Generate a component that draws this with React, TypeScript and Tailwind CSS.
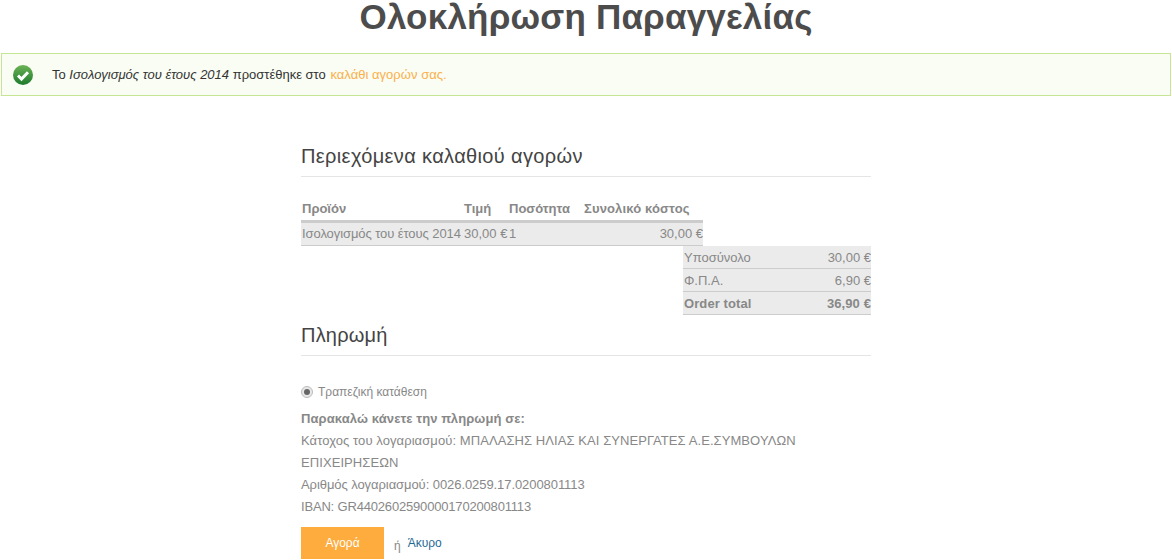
import React from 'react';

const totals = [
  { label: 'Υποσύνολο', value: '30,00 €' },
  { label: 'Φ.Π.Α.', value: '6,90 €' },
  { label: 'Order total', value: '36,90 €', bold: true },
];

const CheckIcon = () => (
  <svg width="22" height="22" viewBox="0 0 22 22">
    <defs>
      <linearGradient id="ok" x1="0" y1="0" x2="0" y2="1">
        <stop offset="0" stopColor="#6cb356" />
        <stop offset="1" stopColor="#1d7a2c" />
      </linearGradient>
    </defs>
    <circle cx="11" cy="11" r="10" fill="url(#ok)" />
    <path d="M6 11.5l3.5 3.5L16 8.2" fill="none" stroke="#fff" strokeWidth="3" />
  </svg>
);

const App: React.FC = () => {
  return (
    <div className="h-[560px] overflow-hidden bg-white font-['Liberation_Sans',Arial,sans-serif] text-[13px] text-[#888]">
      <h1 className="h-[53px] text-center text-[35px] font-bold leading-[33px] tracking-[0.2px] text-[#4c4c4c]">
        Ολοκλήρωση Παραγγελίας
      </h1>

      {/* Success message */}
      <div className="mx-px flex h-[43px] items-center border border-[#c6e695] bg-[#f9fdf3] pl-[10px] text-[#333]">
        <CheckIcon />
        <p className="ml-[18px]">
          Το <em>Ισολογισμός του έτους 2014</em> προστέθηκε στο{' '}
          <a className="ml-px tracking-[0.03px] text-[#fbaf4b]">καλάθι αγορών σας</a>
          <span className="text-[#fbaf4b]">.</span>
        </p>
      </div>

      <div className="ml-[301px] w-[570px]">
        <h2 className="mt-[46px] h-[35px] border-b border-[#e5e5e5] text-[20px] leading-[28px] tracking-[0.36px] text-[#444]">
          Περιεχόμενα καλαθιού αγορών
        </h2>

        <table className="mt-[21px] w-[402px] border-collapse">
          <thead>
            <tr className="h-[23px] border-b-[3px] border-[#ccc] text-left">
              <th className="w-[163px] pl-px font-bold">Προϊόν</th>
              <th className="w-[45px] font-bold">Τιμή</th>
              <th className="w-[75px] font-bold">Ποσότητα</th>
              <th className="font-bold tracking-[0.14px]">Συνολικό κόστος</th>
            </tr>
          </thead>
          <tbody>
            <tr className="h-[24px] border-b border-[#ccc] bg-[#ebebeb]">
              <td className="whitespace-nowrap pl-px tracking-[-0.08px]">Ισολογισμός του έτους 2014</td>
              <td className="whitespace-nowrap">30,00 €</td>
              <td>1</td>
              <td className="text-right">30,00 €</td>
            </tr>
          </tbody>
        </table>

        <div className="ml-[382px] w-[188px]">
          {totals.map((row) => (
            <div
              key={row.label}
              className={`flex h-[23px] items-center justify-between border-b border-[#ccc] bg-[#ebebeb] pl-px pt-[2px] ${row.bold ? 'font-bold tracking-[0.1px]' : ''}`}
            >
              <span>{row.label}</span>
              <span>{row.value}</span>
            </div>
          ))}
        </div>

        <h2 className="mt-[6px] h-[35px] border-b border-[#e5e5e5] text-[20px] leading-[28px] tracking-[0.2px] text-[#444]">
          Πληρωμή
        </h2>

        <label className="mt-[26px] flex h-[20px] items-center text-[12px]">
          <span className="flex h-[12px] w-[12px] items-center justify-center rounded-full border border-[#bbb] bg-[#e8e8e8]">
            <span className="h-[6px] w-[6px] rounded-full bg-[#666]" />
          </span>
          <span className="ml-[5px]">Τραπεζική κατάθεση</span>
        </label>

        <div className="mt-[6px] leading-[22px]">
          <p className="font-bold tracking-[0.1px]">Παρακαλώ κάνετε την πληρωμή σε:</p>
          <p className="tracking-[0.08px]">Κάτοχος του λογαριασμού: ΜΠΑΛΑΣΗΣ ΗΛΙΑΣ ΚΑΙ ΣΥΝΕΡΓΑΤΕΣ Α.Ε.ΣΥΜΒΟΥΛΩΝ ΕΠΙΧΕΙΡΗΣΕΩΝ</p>
          <p className="tracking-[-0.07px]">Αριθμός λογαριασμού: 0026.0259.17.0200801113</p>
          <p className="tracking-[-0.18px]">IBAN: GR4402602590000170200801113</p>
        </div>

        <div className="mt-[9px] flex items-center text-[12px]">
          <button className="h-[32px] w-[83px] bg-[#fdac3d] text-[#fff]">Αγορά</button>
          <span className="ml-[10px] mt-[6px]">ή</span>
          <a className="ml-[7px] mt-0 text-[#1f6a94]">Άκυρο</a>
        </div>
      </div>
    </div>
  );
};

export default App;
